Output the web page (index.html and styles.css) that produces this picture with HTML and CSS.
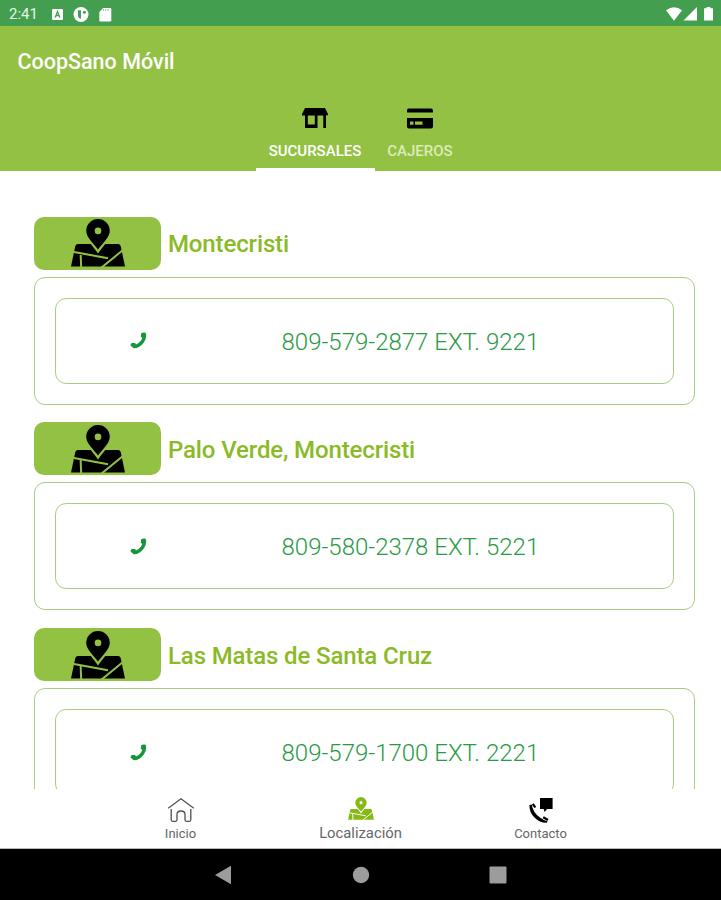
FILE: index.html
```html
<!DOCTYPE html>
<html lang="es">
<head>
<meta charset="utf-8">
<title>CoopSano Móvil</title>
<link rel="stylesheet" href="styles.css">
</head>
<body>
<svg class="defs" aria-hidden="true">
  <symbol id="map" viewBox="0 0 54 48">
    <path d="M7 25H47Q49 25 49.7 27L54 47.5H0L4.3 27Q5 25 7 25Z"/>
    <path class="gap" d="M3 33L37 39.2M52 31L30 49M9.6 34L10.2 49"/>
    <path class="halo" d="M27 31C22 24 15.2 18 15.2 11.8A11.8 11.8 0 0 1 38.8 11.8C38.8 18 32 24 27 31Z"/>
    <path fill-rule="evenodd" d="M27 30.5C22 24 15.2 18 15.2 11.8A11.8 11.8 0 0 1 38.8 11.8C38.8 18 32 24 27 30.5ZM27 8.6A3.3 3.3 0 1 0 27 15.2A3.3 3.3 0 1 0 27 8.6Z"/>
  </symbol>
  <symbol id="phone" viewBox="0 0 17 17">
    <path d="M11.2 1.2Q13.5 0 15.7.8Q17.2 5.5 14 10.2Q9.6 16.4 3.7 16.3L.3 13.2L1.7 11.1L5.1 11L6 12.4Q10.8 10.1 12.3 6L10.8 4.8Z"/>
  </symbol>
</svg>
<header class="status">
  <span class="time">2:41</span>
  <svg class="status-left" viewBox="0 0 64 18" fill="#fff">
    <rect x="1" y="4" width="11" height="11" rx="1.2"/>
    <path d="M4.2 12.5L6.5 6.5L8.8 12.5M5.2 10.5H7.8" fill="none" stroke="#449e50" stroke-width="1.3"/>
    <circle cx="30" cy="9.5" r="7.5"/>
    <path d="M27 5.2H30V13.7Q27 13.5 27 10Z" fill="#449e50"/>
    <circle cx="33.4" cy="7.2" r="1.5" fill="#449e50"/>
    <path d="M52.2 3H59Q60.3 3 60.3 4.3V15.2Q60.3 16.4 59 16.4H49.5Q48.3 16.4 48.3 15.2V7Z"/>
    <path d="M52.5 4V6M54.7 4V6M57 4V6" stroke="#8dc494" stroke-width="1"/>
  </svg>
  <svg class="status-right" viewBox="0 0 50 18" fill="#fff">
    <path d="M0 5.3Q8 -.7 16 5.3L8 15.7Z"/>
    <path d="M31 2V15.5H17.5Z"/>
    <path d="M40.5 2H44.5V3.2H47V15.5H38V3.2H40.5Z"/>
  </svg>
</header>
<section class="appbar">
  <h1>CoopSano Móvil</h1>
  <nav class="tabs">
    <a class="tab active">
      <svg viewBox="0 0 28 24"><path fill-rule="evenodd" d="M4 2H24L27 8V9.2H25V22H22.3V9.5H16.5V22H4V9.5H1V8ZM6.8 9.5V18.5H13.8V9.5Z"/></svg>
      <span>SUCURSALES</span>
    </a>
    <a class="tab">
      <svg viewBox="0 0 28 24"><path d="M2.5 2.5H25Q27 2.5 27 4.5V6.5H1V4.5Q1 2.5 2.5 2.5Z"/><path d="M1 12H27V20.5Q27 22.5 25 22.5H3Q1 22.5 1 20.5Z"/><path fill="#92c143" d="M4 15.5H7.5V18.7H4ZM9 15.5H16.5V18.7H9Z"/></svg>
      <span>CAJEROS</span>
    </a>
  </nav>
</section>
<main>
  <article>
    <div class="title"><span class="badge"><svg><use href="#map"/></svg></span><h2>Montecristi</h2></div>
    <div class="card"><div class="contact"><svg><use href="#phone"/></svg><span>809-579-2877 EXT. 9221</span></div></div>
  </article>
  <article>
    <div class="title"><span class="badge"><svg><use href="#map"/></svg></span><h2>Palo Verde, Montecristi</h2></div>
    <div class="card"><div class="contact"><svg><use href="#phone"/></svg><span>809-580-2378 EXT. 5221</span></div></div>
  </article>
  <article>
    <div class="title"><span class="badge"><svg><use href="#map"/></svg></span><h2>Las Matas de Santa Cruz</h2></div>
    <div class="card"><div class="contact"><svg><use href="#phone"/></svg><span>809-579-1700 EXT. 2221</span></div></div>
  </article>
</main>
<nav class="bottom">
  <a class="inicio">
    <svg viewBox="0 0 28 26" fill="none" stroke="#505050" stroke-width="1.3"><path d="M1.2 11.2L14 1.8L26.8 11.2M4.2 12V22.8Q4.2 24.3 5.7 24.3H8.7Q10 24.3 10 22.8V17.5Q10 14 14 14Q18 14 18 17.5V22.8Q18 24.3 19.3 24.3H22.3Q23.8 24.3 23.8 22.8V12"/></svg>
    <span>Inicio</span>
  </a>
  <a class="localizacion">
    <svg><use href="#map"/></svg>
    <span>Localización</span>
  </a>
  <a class="contacto">
    <svg viewBox="0 0 28 26"><path d="M13 1H25.6V12H20L17.6 15L16.6 12H13Z"/><path d="M2.5 8L4.8 7.5Q5.8 15.5 13 20.5Q16 23 20.5 24.2L20 25.8Q13.5 26.5 7.5 20.5Q2 15 2.5 8Z"/><path d="M5.8 6.8L8.3 10.5M16.2 20.2L21 23" stroke="#000" stroke-width="2.2"/></svg>
    <span>Contacto</span>
  </a>
</nav>
<footer class="system">
  <svg viewBox="0 0 18 20"><path d="M17 .8V19.2L1 10Z"/></svg>
  <svg viewBox="0 0 18 20"><circle cx="9" cy="10" r="8.2"/></svg>
  <svg viewBox="0 0 18 20"><rect x=".5" y="1.5" width="17" height="17" rx="1"/></svg>
</footer>
</body>
</html>
```
FILE: styles.css
```css
* { box-sizing: border-box; }
body {
  margin: 0;
  width: 721px;
  height: 900px;
  overflow: hidden;
  display: flex;
  flex-direction: column;
  font-family: Roboto, sans-serif;
  background: #fff;
}
svg { display: block; flex: none; }
.defs { position: absolute; width: 0; height: 0; }
.gap { fill: none; stroke: var(--gap, #92c143); stroke-width: 2; }
.halo { fill: none; stroke: var(--gap, #92c143); stroke-width: 4; }

.status {
  height: 26px;
  flex: none;
  background: #449e50;
  display: flex;
  align-items: center;
  padding: 2px 5px 0 9px;
  color: #e7f4e9;
}
.time { width: 42px; font-size: 15px; line-height: 20px; }
.status-left { width: 64px; height: 18px; }
.status-right { width: 50px; height: 18px; margin-left: auto; }

.appbar {
  height: 145px;
  flex: none;
  background: #92c143;
  display: flex;
  flex-direction: column;
}
h1 {
  margin: 22px 0 0 17.5px;
  font-size: 21.5px;
  line-height: 28px;
  font-weight: 500;
  color: #fff;
}
.tabs { display: flex; justify-content: center; margin-top: auto; }
.tab {
  height: 67px;
  display: flex;
  flex-direction: column;
  align-items: center;
  font-size: 15px;
  line-height: 20px;
  font-weight: 500;
  color: #dbecb8;
  width: 91px;
}
.tab.active { width: 119px; color: #fff; border-bottom: 3px solid #fff; }
.tab svg { width: 28px; height: 24px; margin-top: 2px; }
.tab span { margin-top: 11px; }

main {
  flex: 1;
  min-height: 0;
  overflow: hidden;
  padding: 45.5px 26px 0 34px;
  display: flex;
  flex-direction: column;
  gap: 17.8px;
}
article { flex: none; }
.title { display: flex; align-items: center; height: 53px; gap: 7px; }
.badge {
  width: 127px;
  height: 53px;
  border-radius: 10px;
  background: #92c143;
  display: flex;
  align-items: center;
  justify-content: center;
}
.badge svg { width: 54px; height: 48px; }
h2 {
  margin: 2px 0 0;
  font-size: 24px;
  line-height: 30px;
  font-weight: 500;
  letter-spacing: -0.13px;
  color: #8aba26;
}
.card {
  margin-top: 7px;
  height: 128px;
  padding: 20px;
  border: 1px solid #a9cd83;
  border-radius: 11px;
}
.contact {
  height: 86px;
  border: 1px solid #a9cd83;
  border-radius: 11px;
  display: flex;
  align-items: center;
}
.contact svg { width: 17px; height: 17px; margin-left: 74px; fill: #16963a; }
.contact span {
  margin: 2px 0 0 134.5px;
  font-size: 24px;
  line-height: 30px;
  color: #299a43;
  font-weight: 300;
  white-space: nowrap;
}

.bottom {
  height: 60px;
  flex: none;
  display: flex;
  justify-content: center;
  background: #fff;
  border-bottom: 1px solid #bbb;
}
.bottom a {
  width: 180px;
  display: flex;
  flex-direction: column;
  align-items: center;
  padding-top: 8px;
  font-size: 13px;
  line-height: 17px;
  color: #666;
}
.bottom svg { width: 28px; height: 26px; }
.bottom span { margin-top: 2px; }
.bottom .localizacion svg { width: 26px; height: 23px; margin: 0 0 3px; fill: #84b916; --gap: #fff; }
.bottom .localizacion span { font-size: 14.8px; margin-top: 2px; }

.system {
  height: 51px;
  flex: none;
  background: #000;
  display: flex;
  justify-content: center;
  align-items: center;
  gap: 119.5px;
}
.system svg { width: 18px; height: 20px; fill: #9c9c9c; }
```
